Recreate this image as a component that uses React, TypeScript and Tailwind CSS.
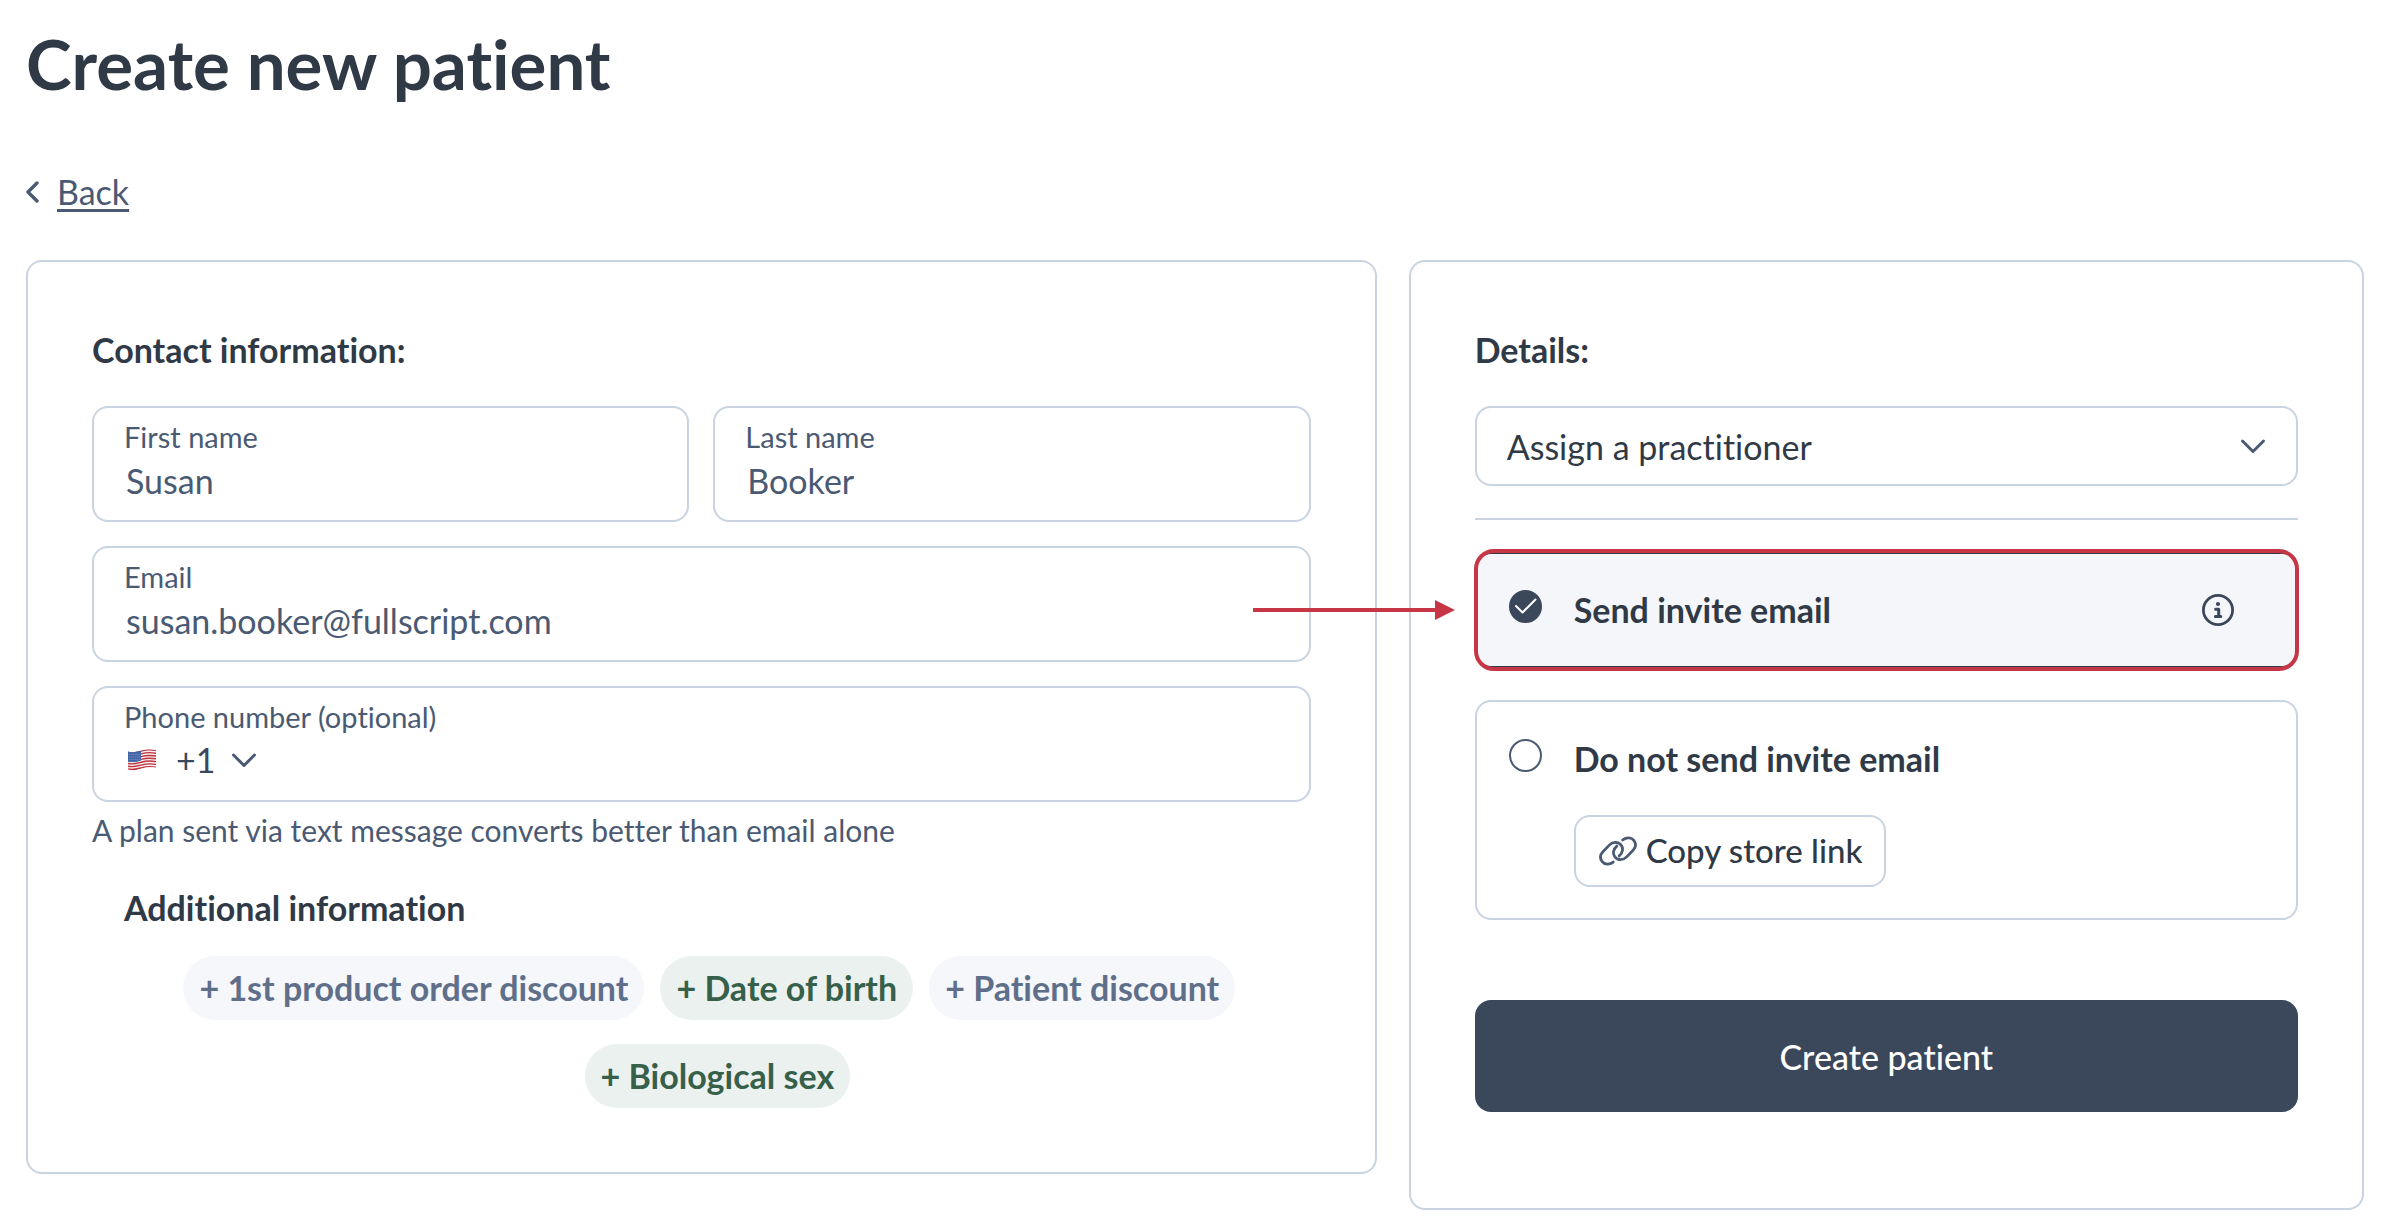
import { useState } from "react";
import type { ReactNode } from "react";

const fieldBox =
  "rounded-2xl border-2 border-[#c9d3e1] bg-white px-[30px] pt-[13px] pb-[17px]";
const fieldLabel = "block text-[29px] leading-8 text-[#4a5a73]";
const fieldInput =
  "mt-1 block h-[46px] w-full bg-transparent pl-0.5 text-[34px] text-[#4a5a73] outline-none";
const sectionHeading = "text-[34px] leading-[48px] font-bold text-[#303a47]";

function ChevronDown() {
  return (
    <svg
      width="26"
      height="16"
      viewBox="0 0 26 16"
      fill="none"
      stroke="#4a5a73"
      strokeWidth="3"
      strokeLinecap="round"
      strokeLinejoin="round"
      aria-hidden="true"
    >
      <path d="M2.5 3 13 13.500 23.5 3" />
    </svg>
  );
}

function ChevronLeft() {
  return (
    <svg
      width="14"
      height="22"
      viewBox="0 0 14 22"
      fill="none"
      stroke="#4a5a73"
      strokeWidth="3.400"
      strokeLinecap="round"
      strokeLinejoin="round"
      aria-hidden="true"
    >
      <path d="M11 2 2 11l9 9" />
    </svg>
  );
}

function LinkIcon() {
  return (
    <svg
      width="40"
      height="32"
      viewBox="0 0 40.6 32"
      fill="none"
      stroke="#4a5a73"
      strokeWidth="2.8"
      strokeLinecap="round"
      aria-hidden="true"
    >
      <path d="M15.5 27.2C11.5 30.2 6.5 29.8 4 26.5 1.8 23.2 2.3 19.5 5 16.8L11.5 10C15 6.3 20.5 6.3 23.3 9.8 26 13.2 25.2 18 21.5 21" />
      <path d="M25.1 4.8C29.1 1.8 34.1 2.2 36.6 5.5 38.8 8.8 38.3 12.5 35.6 15.2L29.1 22C25.6 25.7 20.1 25.7 17.3 22.2 14.6 18.8 15.4 14 19.1 11" />
    </svg>
  );
}

function InfoIcon() {
  return (
    <svg
      width="32"
      height="32"
      viewBox="-16 -16 32 32"
      fill="none"
      stroke="#3b475a"
      strokeWidth="2.8"
      strokeLinecap="round"
      strokeLinejoin="round"
      aria-hidden="true"
    >
      <circle r="14.6" />
      <circle cy="-6" r="2.100" fill="#3b475a" stroke="none" />
      <path strokeWidth="3" d="M-2.4-.8H.7V6.4M-2.6 6.4H2.8" />
    </svg>
  );
}

function FlagUS() {
  const stripes = [0, 1, 2, 3, 4, 5, 6];
  return (
    <svg width="28" height="22" viewBox="0 0 28 22" aria-hidden="true">
      <defs>
        <clipPath id="flag-shape">
          <path d="M0 2.6C5 4 9 2.600 14 1.200 19-.2 23 0 28 .8V18.600C23 17.800 19 18 14 19.400 9 21 5 21.800 0 20.600Z" />
        </clipPath>
      </defs>
      <g clipPath="url(#flag-shape)">
        <rect width="28" height="22" fill="#f3eeee" />
        {stripes.map((i) => (
          <path
            key={i}
            transform={`translate(0 ${i * 2.8})`}
            d="M0 3.200C5 4.600 9 3.200 14 1.800 19 .4 23 .6 28 1.400"
            fill="none"
            stroke="#c2343f"
            strokeWidth="1.400"
          />
        ))}
        <path d="M0 0H13V11.500C9 12.800 5 13.600 0 12.800Z" fill="#4467a6" />
        <path
          d="M1.500 5.500h11M1.500 8h11M1.500 10.500h11"
          stroke="#8ea5cf"
          strokeWidth=".8"
          strokeDasharray=".8 1.200"
        />
      </g>
    </svg>
  );
}

function TextField({
  id,
  label,
  type = "text",
  value,
}: {
  id: string;
  label: string;
  type?: string;
  value: string;
}) {
  return (
    <div className={fieldBox}>
      <label htmlFor={id} className={fieldLabel}>
        {label}
      </label>
      <input id={id} type={type} defaultValue={value} className={fieldInput} />
    </div>
  );
}

function Chip({
  tone,
  className = "",
  children,
}: {
  tone: "slate" | "green";
  className?: string;
  children: ReactNode;
}) {
  const colors =
    tone === "green"
      ? "bg-[#ebf1ef] text-[#36604a]"
      : "bg-[#f5f7fb] text-[#5f6f8a]";
  return (
    <button
      type="button"
      className={`h-16 rounded-full px-4 text-[34px] leading-[48px] font-bold ${colors} ${className}`}
    >
      {children}
    </button>
  );
}

function InviteRadio({
  id,
  checked,
  onSelect,
}: {
  id: string;
  checked: boolean;
  onSelect: () => void;
}) {
  return (
    <span className="relative mt-[6px] block size-[33px] shrink-0">
      <input
        id={id}
        type="radio"
        name="invite"
        checked={checked}
        onChange={onSelect}
        className="peer block size-full appearance-none rounded-full border-2 border-[#4a5a73] bg-white checked:border-[#3b475a] checked:bg-[#3b475a]"
      />
      <svg
        viewBox="0 0 33 33"
        fill="none"
        stroke="#fff"
        strokeWidth="2"
        strokeLinecap="round"
        strokeLinejoin="round"
        className="pointer-events-none absolute inset-0 hidden size-full peer-checked:block"
        aria-hidden="true"
      >
        <path d="M7 16l6.500 6.500L26.500 9.500" />
      </svg>
    </span>
  );
}

function PointerArrow() {
  return (
    <svg
      width="202"
      height="20"
      viewBox="0 0 202 20"
      fill="#c73646"
      className="pointer-events-none absolute top-1/2 right-full mr-5 -translate-y-1/2"
      aria-hidden="true"
    >
      <path d="M0 8h183v4H0zM182 0l20 10-20 10z" />
    </svg>
  );
}

export default function App() {
  const [sendInvite, setSendInvite] = useState(true);

  return (
    <main className="min-h-screen bg-white pt-[22px] pr-7 pl-[26px] font-[Lato,sans-serif] [font-variant-ligatures:none]">
      <h1 className="text-[69px] leading-[84px] font-bold text-[#303a47]">
        Create new patient
      </h1>
      <a
        href="#patients"
        className="mt-[62px] flex w-fit items-center gap-[17px] text-[34px] leading-[48px] text-[#4a5a73]"
      >
        <ChevronLeft />
        <span className="underline decoration-[3px] underline-offset-4 [text-decoration-skip-ink:none]">
          Back
        </span>
      </a>

      <form className="mt-11 grid grid-cols-[41fr_29fr] items-start gap-8">
        <section className="rounded-2xl border-2 border-[#c9d3e1] p-16">
          <h2 className={sectionHeading}>Contact information:</h2>
          <div className="mt-8 grid grid-cols-2 gap-6">
            <TextField id="first-name" label="First name" value="Susan" />
            <TextField id="last-name" label="Last name" value="Booker" />
            <div className="col-span-2">
              <TextField
                id="email"
                label="Email"
                type="email"
                value="susan.booker@fullscript.com"
              />
            </div>
            <div className={`col-span-2 ${fieldBox}`}>
              <label htmlFor="phone" className={fieldLabel}>
                Phone number (optional)
              </label>
              <div className="mt-1 flex h-[46px] items-center pl-1">
                <button
                  type="button"
                  aria-label="Country code"
                  className="flex items-center text-[34px] leading-[46px] text-[#3b475a]"
                >
                  <FlagUS />
                  <span className="ml-5">+1</span>
                  <span className="ml-4">
                    <ChevronDown />
                  </span>
                </button>
                <input
                  id="phone"
                  type="tel"
                  className="ml-6 h-full min-w-0 flex-1 bg-transparent text-[34px] text-[#4a5a73] outline-none"
                />
              </div>
            </div>
          </div>
          <p className="mt-2 text-[30px] leading-10 text-[#4a5a73]">
            A plan sent via text message converts better than email alone
          </p>

          <div className="mt-[34px] px-8">
            <h3 className={sectionHeading}>Additional information</h3>
            <div className="mt-6 flex flex-wrap justify-center gap-x-4 gap-y-6 pl-4">
              <Chip tone="slate">+ 1st product order discount</Chip>
              <Chip tone="green">+ Date of birth</Chip>
              <Chip tone="slate">+ Patient discount</Chip>
              <Chip tone="green" className="ml-4">
                + Biological sex
              </Chip>
            </div>
          </div>
        </section>

        <section className="rounded-2xl border-2 border-[#c9d3e1] px-16 pt-16 pb-24">
          <h2 className={sectionHeading}>Details:</h2>
          <div className="relative mt-8">
            <select
              aria-label="Assign a practitioner"
              className="block h-20 w-full appearance-none rounded-2xl border-2 border-[#c9d3e1] bg-white px-[30px] text-[34px] text-[#303a47] outline-none"
            >
              <option>Assign a practitioner</option>
            </select>
            <span className="pointer-events-none absolute inset-y-0 right-8 flex items-center">
              <ChevronDown />
            </span>
          </div>
          <hr className="mt-8 border-t-2 border-[#c9d3e1]" />

          <div className="relative mt-8">
            <div className="flex rounded-2xl border-2 border-[#303a47] bg-[#f5f6fa] py-[30px] pr-[62px] pl-8">
              <InviteRadio
                id="send"
                checked={sendInvite}
                onSelect={() => setSendInvite(true)}
              />
              <label
                htmlFor="send"
                className="ml-8 flex-1 text-[34px] leading-[52px] font-bold text-[#303a47]"
              >
                Send invite email
              </label>
              <button type="button" aria-label="About invite emails">
                <InfoIcon />
              </button>
            </div>
            <span className="pointer-events-none absolute -inset-x-px -inset-y-[3px] rounded-[20px] border-4 border-[#c73646]" />
            <PointerArrow />
          </div>

          <div className="mt-8 flex rounded-2xl border-2 border-[#c9d3e1] py-[31px] pl-8">
            <InviteRadio
              id="no-send"
              checked={!sendInvite}
              onSelect={() => setSendInvite(false)}
            />
            <div className="ml-8 flex flex-col items-start">
              <label
                htmlFor="no-send"
                className="text-[34px] leading-[52px] font-bold text-[#303a47]"
              >
                Do not send invite email
              </label>
              <button
                type="button"
                className="mt-[30px] flex h-[72px] items-center gap-2 rounded-2xl border-2 border-[#c9d3e1] px-[22px] text-[33px] font-medium text-[#303a47]"
              >
                <LinkIcon />
                Copy store link
              </button>
            </div>
          </div>

          <button
            type="submit"
            className="mt-20 h-28 w-full rounded-2xl bg-[#3b475a] text-[34px] font-medium text-white"
          >
            Create patient
          </button>
        </section>
      </form>
    </main>
  );
}
